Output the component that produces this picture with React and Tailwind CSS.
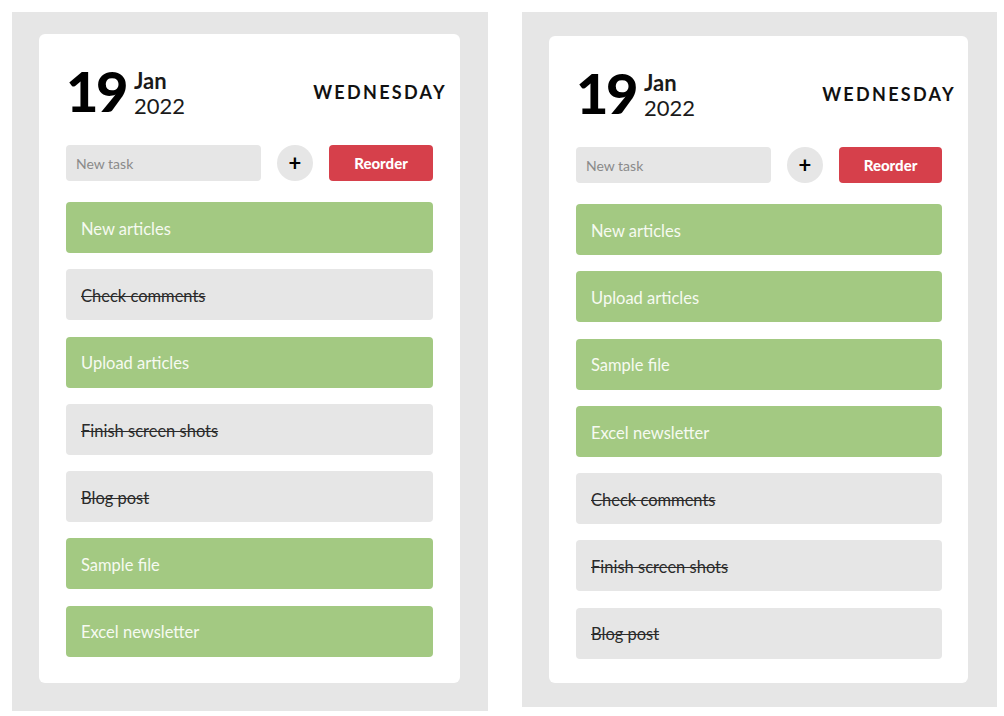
const leftTasks = [
  { text: 'New articles', done: false },
  { text: 'Check comments', done: true },
  { text: 'Upload articles', done: false },
  { text: 'Finish screen shots', done: true },
  { text: 'Blog post', done: true },
  { text: 'Sample file', done: false },
  { text: 'Excel newsletter', done: false },
]

const rightTasks = [
  { text: 'New articles', done: false },
  { text: 'Upload articles', done: false },
  { text: 'Sample file', done: false },
  { text: 'Excel newsletter', done: false },
  { text: 'Check comments', done: true },
  { text: 'Finish screen shots', done: true },
  { text: 'Blog post', done: true },
]

function Task({ text, done }) {
  return (
    <div
      className={
        done
          ? 'h-[51px] rounded-[4px] bg-[#e6e6e6] pl-[15px] pt-[3px] flex items-center text-[16.5px] text-[#2b2b2b] line-through'
          : 'h-[51px] rounded-[4px] bg-[#a3c982] pl-[15px] pt-[3px] flex items-center text-[16.5px] text-[#f6faf1]'
      }
    >
      {text}
    </div>
  )
}

function TodoCard({ tasks, outer, card }) {
  return (
    <div className={outer}>
      <div className={card}>
        {/* date header */}
        <div className="h-[56px] flex items-center justify-between mr-[-14px]">
          <div className="flex items-center gap-[8px]">
            <span className="text-[56px] leading-none font-black tracking-[-2.5px] text-black">19</span>
            <div className="flex flex-col text-[22px] leading-[25px] text-[#1a1a1a] pt-[3px]">
              <span className="font-bold">Jan</span>
              <span>2022</span>
            </div>
          </div>
          <span className="text-[18px] font-bold tracking-[2.3px] text-[#111] pt-[3px]">WEDNESDAY</span>
        </div>

        {/* new task row */}
        <div className="mt-[26px] h-[36px] flex items-center gap-[16px]">
          <div className="w-[195px] h-full rounded-[4px] bg-[#e6e6e6] pl-[10px] flex items-center text-[14px] text-[#8a8a8a]">
            New task
          </div>
          <div className="w-[36px] h-[36px] rounded-full bg-[#e6e6e6] flex items-center justify-center text-[22px] font-bold text-black leading-none">
            +
          </div>
          <div className="flex-1 h-full rounded-[4px] bg-[#d6404b] flex items-center justify-center text-[15px] font-black text-white">
            Reorder
          </div>
        </div>

        <div className="mt-[21px] flex flex-col gap-[16.3px]">
          {tasks.map((t) => (
            <Task key={t.text} {...t} />
          ))}
        </div>
      </div>
    </div>
  )
}

export default function App() {
  return (
    <div className="min-h-[716px] bg-white flex items-start gap-[34px] pt-[12px] pl-[12px] font-['Lato','Noto_Sans',sans-serif]">
      <TodoCard
        tasks={leftTasks}
        outer="w-[476px] h-[699px] bg-[#e6e6e6] pt-[22px] pl-[27px]"
        card="w-[421px] h-[649px] bg-white rounded-[6px] pt-[29px] px-[27px]"
      />
      <TodoCard
        tasks={rightTasks}
        outer="w-[475px] h-[695px] bg-[#e6e6e6] pt-[24px] pl-[27px]"
        card="w-[419px] h-[647px] bg-white rounded-[6px] pt-[29px] pl-[27px] pr-[26px]"
      />
    </div>
  )
}
